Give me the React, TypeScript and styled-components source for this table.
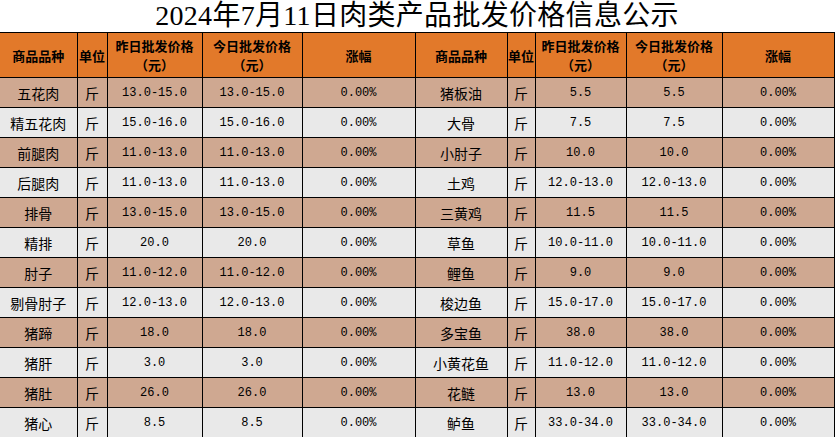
import React from "react";
import styled, { createGlobalStyle } from "styled-components";

const Global = createGlobalStyle`
  html, body { margin: 0; padding: 0; background: #ffffff; }
  body { width: 837px; height: 437px; overflow: hidden; }
`;

const Page = styled.div`
  width: 834px;
  display: flex;
  flex-direction: column;
`;

const Title = styled.h1`
  margin: 0;
  height: 32px;
  display: flex;
  align-items: flex-end;
  justify-content: center;
  font-family: "Liberation Serif", "Noto Sans CJK SC", serif;
  font-weight: 400;
  font-size: 28px;
  line-height: 32px;
  color: #000;
  letter-spacing: 0.3px;
`;

const Table = styled.table`
  width: 834px;
  border-collapse: collapse;
  table-layout: fixed;
`;

const HeadCell = styled.th<{ $first?: boolean }>`
  height: 44px;
  padding: 0;
  background: #e2792a;
  border: 1px solid #000;
  border-left: ${(p) => (p.$first ? "none" : "1px solid #000")};
  font-family: "Noto Sans CJK SC", sans-serif;
  font-weight: 700;
  font-size: 13px;
  color: #000;
  text-align: center;
  vertical-align: middle;
  white-space: nowrap;
  overflow: hidden;
`;

const HeadLine = styled.span`
  display: block;
  line-height: 19px;
  height: 19px;
`;

const Row = styled.tr<{ $alt: boolean }>`
  height: 30px;
  background: ${(p) => (p.$alt ? "#e9e9e9" : "#cfa891")};
`;

const Cell = styled.td<{ $mono?: boolean; $first?: boolean }>`
  padding: 0;
  border: 1px solid #000;
  border-left: ${(p) => (p.$first ? "none" : "1px solid #000")};
  text-align: center;
  vertical-align: middle;
  color: #000;
  white-space: nowrap;
  font-family: ${(p) =>
    p.$mono ? `"Liberation Mono", "Noto Sans CJK SC", monospace` : `"Noto Sans CJK SC", sans-serif`};
  font-size: ${(p) => (p.$mono ? "12px" : "14px")};
`;

const widths = [77, 30, 95, 100, 113, 92, 28, 91, 96, 112];

type Item = [string, string];

const left: Item[] = [
  ["五花肉", "13.0-15.0"],
  ["精五花肉", "15.0-16.0"],
  ["前腿肉", "11.0-13.0"],
  ["后腿肉", "11.0-13.0"],
  ["排骨", "13.0-15.0"],
  ["精排", "20.0"],
  ["肘子", "11.0-12.0"],
  ["剔骨肘子", "12.0-13.0"],
  ["猪蹄", "18.0"],
  ["猪肝", "3.0"],
  ["猪肚", "26.0"],
  ["猪心", "8.5"],
];

const right: Item[] = [
  ["猪板油", "5.5"],
  ["大骨", "7.5"],
  ["小肘子", "10.0"],
  ["土鸡", "12.0-13.0"],
  ["三黄鸡", "11.5"],
  ["草鱼", "10.0-11.0"],
  ["鲤鱼", "9.0"],
  ["梭边鱼", "15.0-17.0"],
  ["多宝鱼", "38.0"],
  ["小黄花鱼", "11.0-12.0"],
  ["花鲢", "13.0"],
  ["鲈鱼", "33.0-34.0"],
];

const HeadGroup: React.FC<{ first?: boolean }> = ({ first }) => (
  <>
    <HeadCell $first={first}>商品品种</HeadCell>
    <HeadCell>单位</HeadCell>
    <HeadCell>
      <HeadLine>昨日批发价格</HeadLine>
      <HeadLine>（元）</HeadLine>
    </HeadCell>
    <HeadCell>
      <HeadLine>今日批发价格</HeadLine>
      <HeadLine>（元）</HeadLine>
    </HeadCell>
    <HeadCell>涨幅</HeadCell>
  </>
);

const DataGroup: React.FC<{ item: Item; first?: boolean }> = ({ item, first }) => (
  <>
    <Cell $first={first}>{item[0]}</Cell>
    <Cell>斤</Cell>
    <Cell $mono>{item[1]}</Cell>
    <Cell $mono>{item[1]}</Cell>
    <Cell $mono>0.00%</Cell>
  </>
);

export default function App() {
  return (
    <Page>
      <Global />
      <Title>2024年7月11日肉类产品批发价格信息公示</Title>
      <Table>
        <colgroup>
          {widths.map((w, i) => (
            <col key={i} style={{ width: w }} />
          ))}
        </colgroup>
        <thead>
          <tr>
            <HeadGroup first />
            <HeadGroup />
          </tr>
        </thead>
        <tbody>
          {left.map((item, i) => (
            <Row key={i} $alt={i % 2 === 1}>
              <DataGroup item={item} first />
              <DataGroup item={right[i]} />
            </Row>
          ))}
        </tbody>
      </Table>
    </Page>
  );
}
